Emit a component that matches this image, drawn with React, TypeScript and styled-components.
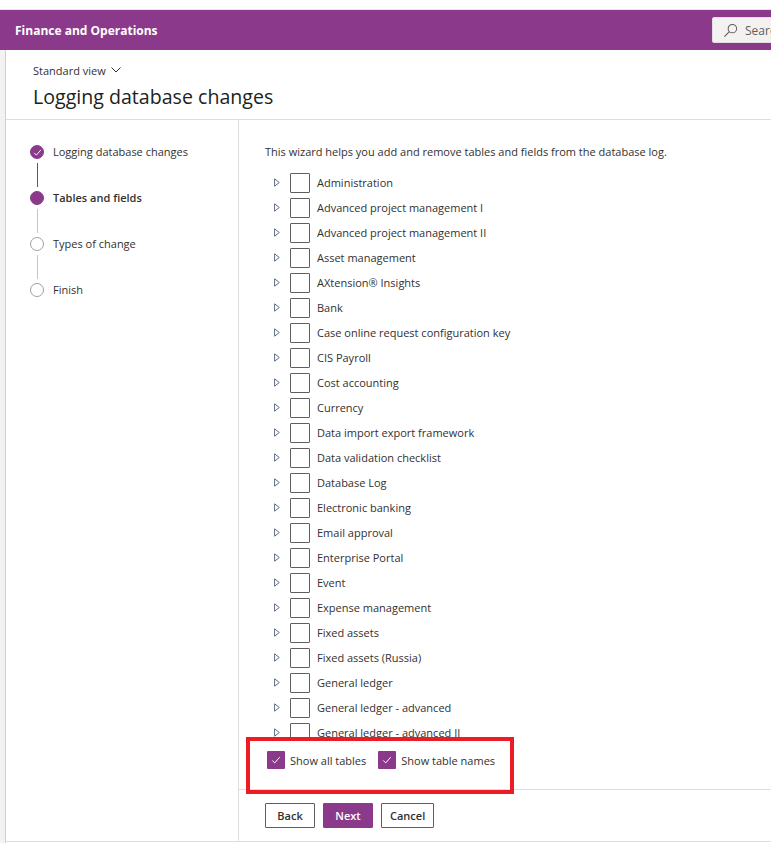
import { createGlobalStyle, styled } from "styled-components";

const purple = "#8b3a8b";
const text = "#323130";
const line = "#dedede";

const GlobalStyle = createGlobalStyle`
  html, body {
    margin: 0;
    padding: 0;
    background: #ffffff;
  }
  body {
    font-family: "Open Sans", "Noto Sans", sans-serif;
    color: ${text};
  }
`;

const Root = styled.div`
  width: 771px;
  height: 843px;
  overflow: hidden;
  background: #ffffff;
  border-top: 9px solid #ffffff;
  box-sizing: border-box;
`;

const TopBar = styled.header`
  height: 40px;
  background: ${purple};
  border-top: 1px solid #e3e3e3;
  display: flex;
  align-items: center;
  justify-content: space-between;
  padding-left: 15px;
  overflow: hidden;
`;

const AppName = styled.div`
  color: #ffffff;
  font-size: 12px;
  font-weight: 700;
`;

const SearchBox = styled.div`
  width: 200px;
  height: 24px;
  margin-right: -153px;
  background: #f3f2f1;
  border: 1px solid #e1dfdd;
  border-radius: 2px;
  display: flex;
  align-items: center;
  gap: 7px;
  padding-left: 10px;
  color: #605e5c;
  font-size: 12px;
`;

const Body = styled.div`
  display: flex;
  height: 793px;
`;

const Gutter = styled.div`
  width: 5px;
  background: #f3f2f1;
  border-right: 1px solid #d2d0ce;
  flex-shrink: 0;
`;

const Main = styled.main`
  flex: 1;
  display: flex;
  flex-direction: column;
`;

const PageHead = styled.div`
  padding: 11px 0 0 27px;
  height: 58px;
  border-bottom: 1px solid ${line};
`;

const ViewSelect = styled.div`
  font-size: 11px;
  display: flex;
  align-items: center;
  gap: 5px;
  height: 18px;
`;

const Title = styled.h1`
  margin: 4px 0 0;
  font-size: 19.6px;
  font-weight: 400;
  color: #201f1e;
  line-height: 28px;
`;

const Wizard = styled.div`
  display: grid;
  grid-template-columns: 233px 1fr;
  height: 721px;
  border-bottom: 1px solid ${line};
`;

const StepList = styled.ol`
  list-style: none;
  margin: 0;
  padding: 25px 0 0 24px;
  border-right: 1px solid ${line};
`;

const Step = styled.li`
  display: flex;
  gap: 9px;
`;

const Marker = styled.div`
  width: 14px;
  display: flex;
  flex-direction: column;
  align-items: center;
`;

const Circle = styled.div<{ $state: "done" | "current" | "todo" }>`
  width: 14px;
  height: 14px;
  box-sizing: border-box;
  border-radius: 50%;
  background: ${({ $state }) => ($state === "todo" ? "#ffffff" : purple)};
  border: 1px solid ${({ $state }) => ($state === "todo" ? "#a19f9d" : purple)};
  display: flex;
  align-items: center;
  justify-content: center;
`;

const Connector = styled.div<{ $active: boolean }>`
  width: 1px;
  height: 24px;
  margin: 4px 0;
  background: ${({ $active }) => ($active ? purple : "#c8c6c4")};
`;

const StepLabel = styled.span<{ $current: boolean }>`
  font-size: 11px;
  line-height: 14px;
  font-weight: ${({ $current }) => ($current ? 600 : 400)};
`;

const Content = styled.section`
  display: flex;
  flex-direction: column;
  min-height: 0;
`;

const Intro = styled.p`
  margin: 0;
  padding: 22px 0 0 26px;
  font-size: 11px;
  line-height: 20px;
`;

const Tree = styled.ul`
  list-style: none;
  margin: 8px 0 0;
  padding: 0 0 0 35px;
  flex: 1;
  min-height: 0;
  overflow: hidden;
`;

const TreeRow = styled.li`
  height: 25px;
  display: flex;
  align-items: center;
  font-size: 11px;
  white-space: nowrap;
`;

const Expander = styled.svg`
  width: 6px;
  height: 9px;
  margin-right: 10px;
  flex-shrink: 0;
`;

const Box = styled.span`
  width: 20px;
  height: 20px;
  box-sizing: border-box;
  border: 1px solid #605e5c;
  border-radius: 1px;
  margin-right: 7px;
  flex-shrink: 0;
`;

const Options = styled.div`
  position: relative;
  height: 51px;
  box-sizing: border-box;
  padding: 12px 0 0 28px;
  border-bottom: 1px solid ${line};
  display: flex;
  gap: 12px;
  flex-shrink: 0;
`;

const Option = styled.label`
  display: flex;
  align-items: center;
  gap: 5px;
  height: 18px;
  font-size: 11px;
`;

const CheckedBox = styled.span`
  width: 18px;
  height: 18px;
  background: ${purple};
  border-radius: 1px;
  display: flex;
  align-items: center;
  justify-content: center;
`;

const Highlight = styled.div`
  position: absolute;
  top: -2px;
  left: 7px;
  width: 268px;
  height: 57px;
  box-sizing: border-box;
  border: 4px solid #ed1c24;
  pointer-events: none;
`;

const Actions = styled.div`
  display: flex;
  gap: 8px;
  padding: 13px 0 0 26px;
  height: 51px;
  box-sizing: border-box;
  flex-shrink: 0;
`;

const Button = styled.button<{ $primary?: boolean }>`
  height: 25px;
  min-width: 50px;
  padding: 0 8px;
  box-sizing: border-box;
  font-family: inherit;
  font-size: 11px;
  font-weight: 600;
  border-radius: 1px;
  border: 1px solid ${({ $primary }) => ($primary ? purple : "#605e5c")};
  background: ${({ $primary }) => ($primary ? purple : "#ffffff")};
  color: ${({ $primary }) => ($primary ? "#ffffff" : text)};
`;

const tables = [
  "Administration",
  "Advanced project management I",
  "Advanced project management II",
  "Asset management",
  "AXtension® Insights",
  "Bank",
  "Case online request configuration key",
  "CIS Payroll",
  "Cost accounting",
  "Currency",
  "Data import export framework",
  "Data validation checklist",
  "Database Log",
  "Electronic banking",
  "Email approval",
  "Enterprise Portal",
  "Event",
  "Expense management",
  "Fixed assets",
  "Fixed assets (Russia)",
  "General ledger",
  "General ledger - advanced",
  "General ledger - advanced II",
  "General ledger - advanced III",
];

const steps: { label: string; state: "done" | "current" | "todo" }[] = [
  { label: "Logging database changes", state: "done" },
  { label: "Tables and fields", state: "current" },
  { label: "Types of change", state: "todo" },
  { label: "Finish", state: "todo" },
];

const Check = ({ size = 10 }: { size?: number }) => (
  <svg width={size} height={size} viewBox="0 0 12 12">
    <path d="M1.5 6.5 L4.5 9.5 L10.5 2.5" fill="none" stroke="#ffffff" strokeWidth="1.2" />
  </svg>
);

const App = () => {
  return (
    <Root>
      <GlobalStyle />
      <TopBar>
        <AppName>Finance and Operations</AppName>
        <SearchBox>
          <svg width="15" height="15" viewBox="0 0 16 16">
            <circle cx="10" cy="6" r="4.5" fill="none" stroke="#605e5c" strokeWidth="1.1" />
            <path d="M6.8 9.2 L1.5 14.5" stroke="#605e5c" strokeWidth="1.2" />
          </svg>
          Search
        </SearchBox>
      </TopBar>
      <Body>
        <Gutter />
        <Main>
          <PageHead>
            <ViewSelect>
              Standard view
              <svg width="10" height="6" viewBox="0 0 10 6">
                <path d="M0.5 0.5 L5 5 L9.5 0.5" fill="none" stroke="#323130" strokeWidth="1" />
              </svg>
            </ViewSelect>
            <Title>Logging database changes</Title>
          </PageHead>
          <Wizard>
            <StepList>
              {steps.map((s, i) => (
                <Step key={s.label}>
                  <Marker>
                    <Circle $state={s.state}>{s.state === "done" && <Check size={9} />}</Circle>
                    {i < steps.length - 1 && <Connector $active={s.state === "done"} />}
                  </Marker>
                  <StepLabel $current={s.state === "current"}>{s.label}</StepLabel>
                </Step>
              ))}
            </StepList>
            <Content>
              <Intro>This wizard helps you add and remove tables and fields from the database log.</Intro>
              <Tree>
                {tables.map((t) => (
                  <TreeRow key={t}>
                    <Expander viewBox="0 0 6 9">
                      <path d="M0.6 0.8 L5.3 4.5 L0.6 8.2 Z" fill="none" stroke="#5f6b85" strokeWidth="1" />
                    </Expander>
                    <Box />
                    {t}
                  </TreeRow>
                ))}
              </Tree>
              <Options>
                <Option>
                  <CheckedBox>
                    <Check />
                  </CheckedBox>
                  Show all tables
                </Option>
                <Option>
                  <CheckedBox>
                    <Check />
                  </CheckedBox>
                  Show table names
                </Option>
                <Highlight />
              </Options>
              <Actions>
                <Button>Back</Button>
                <Button $primary>Next</Button>
                <Button>Cancel</Button>
              </Actions>
            </Content>
          </Wizard>
        </Main>
      </Body>
    </Root>
  );
};

export default App;
